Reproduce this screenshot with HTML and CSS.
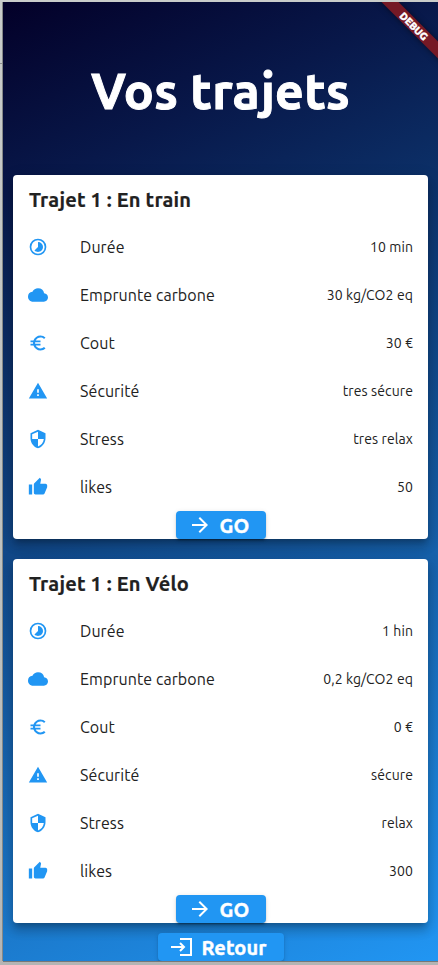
FILE: index.html
```html
<!DOCTYPE html>
<html lang="fr">
<head>
<meta charset="utf-8">
<title>Vos trajets</title>
<link rel="stylesheet" href="styles.css">
</head>
<body>
<svg class="sprite" aria-hidden="true">
  <symbol id="time" viewBox="0 0 24 24"><path d="M16.24 7.75A5.97 5.97 0 0 0 12 6v6l-4.24 4.24c2.34 2.34 6.14 2.34 8.49 0a5.99 5.99 0 0 0-.01-8.49zM12 2a10 10 0 1 0 0 20 10 10 0 0 0 0-20zm0 18a8 8 0 1 1 0-16 8 8 0 0 1 0 16z"/></symbol>
  <symbol id="cloud" viewBox="0 0 24 24"><path d="M19.35 10.04A7.49 7.49 0 0 0 12 4C9.11 4 6.6 5.64 5.35 8.04A5.994 5.994 0 0 0 0 14c0 3.31 2.69 6 6 6h13c2.76 0 5-2.24 5-5 0-2.64-2.05-4.78-4.65-4.96z"/></symbol>
  <symbol id="euro" viewBox="0 0 24 24"><path d="M15 18.5c-2.51 0-4.68-1.42-5.76-3.5H15v-2H8.58a6.7 6.7 0 0 1 0-2H15V9H9.24A6.49 6.49 0 0 1 15 5.5c1.61 0 3.09.59 4.23 1.57L21 5.3A8.96 8.96 0 0 0 15 3c-3.92 0-7.24 2.51-8.48 6H3v2h3.06a9.2 9.2 0 0 0 0 2H3v2h3.52c1.24 3.49 4.56 6 8.48 6 2.31 0 4.41-.87 6-2.3l-1.78-1.77A6.4 6.4 0 0 1 15 18.5z"/></symbol>
  <symbol id="warning" viewBox="0 0 24 24"><path d="M1 21h22L12 2 1 21zm12-3h-2v-2h2v2zm0-4h-2v-4h2v4z"/></symbol>
  <symbol id="shield" viewBox="0 0 24 24"><path d="M12 1L3 5v6c0 5.55 3.84 10.74 9 12 5.16-1.26 9-6.45 9-12V5l-9-4zm0 10.99h7c-.53 4.12-3.28 7.79-7 8.94V12H5V6.3l7-3.11v8.8z"/></symbol>
  <symbol id="thumb" viewBox="0 0 24 24"><path d="M1 21h4V9H1v12zm22-11c0-1.1-.9-2-2-2h-6.31l.95-4.57.03-.32c0-.41-.17-.79-.44-1.06L14.17 1 7.59 7.59C7.22 7.95 7 8.45 7 9v10c0 1.1.9 2 2 2h9c.83 0 1.54-.5 1.84-1.22l3.02-7.05c.09-.23.14-.47.14-.73v-2z"/></symbol>
  <symbol id="arrow" viewBox="0 0 24 24"><path d="M12 4l-1.41 1.41L16.17 11H4v2h12.17l-5.58 5.59L12 20l8-8z"/></symbol>
</svg>
<main class="app">
  <div class="debug"><span class="debug-text">DEBUG</span></div>
  <h1 class="title"><span class="w-title">Vos trajets</span></h1>
  <section class="card">
    <h2 class="card-title">Trajet 1 : En train</h2>
    <ul class="rows">
      <li class="row"><svg class="icon"><use href="#time"/></svg><span class="label">Durée</span><span class="value">10 min</span></li>
      <li class="row"><svg class="icon"><use href="#cloud"/></svg><span class="label">Emprunte carbone</span><span class="value">30 kg/CO2 eq</span></li>
      <li class="row"><svg class="icon"><use href="#euro"/></svg><span class="label">Cout</span><span class="value">30 €</span></li>
      <li class="row"><svg class="icon"><use href="#warning"/></svg><span class="label">Sécurité</span><span class="value">tres sécure</span></li>
      <li class="row"><svg class="icon"><use href="#shield"/></svg><span class="label">Stress</span><span class="value">tres relax</span></li>
      <li class="row"><svg class="icon"><use href="#thumb"/></svg><span class="label">likes</span><span class="value">50</span></li>
    </ul>
    <button class="btn go"><svg class="btn-icon"><use href="#arrow"/></svg><span class="btn-text">GO</span></button>
  </section>
  <section class="card">
    <h2 class="card-title">Trajet 1 : En Vélo</h2>
    <ul class="rows">
      <li class="row"><svg class="icon"><use href="#time"/></svg><span class="label">Durée</span><span class="value">1 hin</span></li>
      <li class="row"><svg class="icon"><use href="#cloud"/></svg><span class="label">Emprunte carbone</span><span class="value">0,2 kg/CO2 eq</span></li>
      <li class="row"><svg class="icon"><use href="#euro"/></svg><span class="label">Cout</span><span class="value">0 €</span></li>
      <li class="row"><svg class="icon"><use href="#warning"/></svg><span class="label">Sécurité</span><span class="value">sécure</span></li>
      <li class="row"><svg class="icon"><use href="#shield"/></svg><span class="label">Stress</span><span class="value">relax</span></li>
      <li class="row"><svg class="icon"><use href="#thumb"/></svg><span class="label">likes</span><span class="value">300</span></li>
    </ul>
    <button class="btn go"><svg class="btn-icon"><use href="#arrow"/></svg><span class="btn-text">GO</span></button>
  </section>
  <button class="btn back"><svg class="btn-icon back-icon" viewBox="0 0 24 24"><path d="M10 4h11v16H10M1 12h13M10 8l4 4-4 4"/></svg><span class="btn-text">Retour</span></button>
</main>
</body>
</html>
```
FILE: styles.css
```css
* { box-sizing: border-box; }

body {
  margin: 0;
  height: 965px;
  padding: 2px 0 4px 3px;
  overflow: hidden;
  background:
    linear-gradient(#8d908e, #8d908e) 0 63px / 3px 1px no-repeat,
    linear-gradient(#c9ccca, #b9bcba 90%, #b4b4b4);
  font-family: Ubuntu, "Noto Sans", sans-serif;
  color: #212121;
}

.sprite { display: none; }

.app {
  position: relative;
  display: flex;
  flex-direction: column;
  height: 959px;
  padding: 0 10px;
  overflow: hidden;
  background: linear-gradient(155.6deg, #030028, #08184a 17%, #0c3068 32%, #2196f3);
  box-shadow: -1px 0 0 #858887, 0 1px 0 #777;
}

.debug {
  position: absolute;
  top: 17.5px;
  right: -36px;
  width: 120px;
  height: 12px;
  display: flex;
  align-items: center;
  justify-content: center;
  transform: rotate(45deg);
  background: #751926;
  box-shadow: 0 0 6px rgba(0, 0, 0, .5);
  color: #fff;
}

.debug-text {
  font-size: 10.2px;
  font-weight: 900;
  line-height: 12px;
  -webkit-text-stroke: .4px #fff;
}

.title {
  display: flex;
  flex: 0 0 173px;
  align-items: center;
  justify-content: center;
  margin: 0;
  padding-top: 2px;
  color: #fff;
  font-size: 50px;
  font-weight: 700;
  line-height: 58px;
  white-space: nowrap;
}

.w-title { letter-spacing: .3px; -webkit-text-stroke: 1px #fff; }

.card {
  display: flex;
  flex: 0 0 364px;
  flex-direction: column;
  align-items: center;
  margin-bottom: 20px;
  border-radius: 4px;
  background: #fff;
  box-shadow: 0 5px 5px -3px rgba(0, 0, 0, .2), 0 8px 10px 1px rgba(0, 0, 0, .14), 0 3px 14px 2px rgba(0, 0, 0, .12);
}

.card + .card { margin-bottom: 10px; }

.card-title {
  align-self: stretch;
  height: 48px;
  margin: 0;
  padding-left: 16px;
  font-size: 20px;
  font-weight: 700;
  line-height: 50px;
  letter-spacing: .15px;
  white-space: nowrap;
  -webkit-text-stroke: .2px #212121;
}

.rows {
  align-self: stretch;
  margin: 0;
  padding: 0 15px;
  list-style: none;
}

.row { display: flex; align-items: center; height: 48px; }

.icon { width: 20px; height: 20px; fill: #2196f3; }

.label {
  margin-left: 32px;
  font-size: 16px;
  letter-spacing: .08px;
  white-space: nowrap;
}

.value {
  margin-left: auto;
  font-size: 14px;
  letter-spacing: .1px;
  white-space: nowrap;
}

.btn {
  display: flex;
  flex: 0 0 28px;
  align-items: center;
  align-self: center;
  height: 28px;
  margin: 0;
  padding: 0 0 0 12px;
  border: 0;
  border-radius: 4px;
  background: #2196f3;
  box-shadow: 0 3px 1px -2px rgba(0, 0, 0, .2), 0 2px 2px rgba(0, 0, 0, .14), 0 1px 5px rgba(0, 0, 0, .12);
  color: #fff;
  font: 700 20px/28px Ubuntu, "Noto Sans", sans-serif;
}

.go { width: 90px; }
.back { width: 126px; }
.btn-icon { width: 24px; height: 24px; margin-right: 8px; fill: #fff; }
.back-icon { fill: none; stroke: #fff; stroke-width: 2; }
.btn-text { padding-top: 2px; letter-spacing: .1px; -webkit-text-stroke: .4px #fff; }
```
